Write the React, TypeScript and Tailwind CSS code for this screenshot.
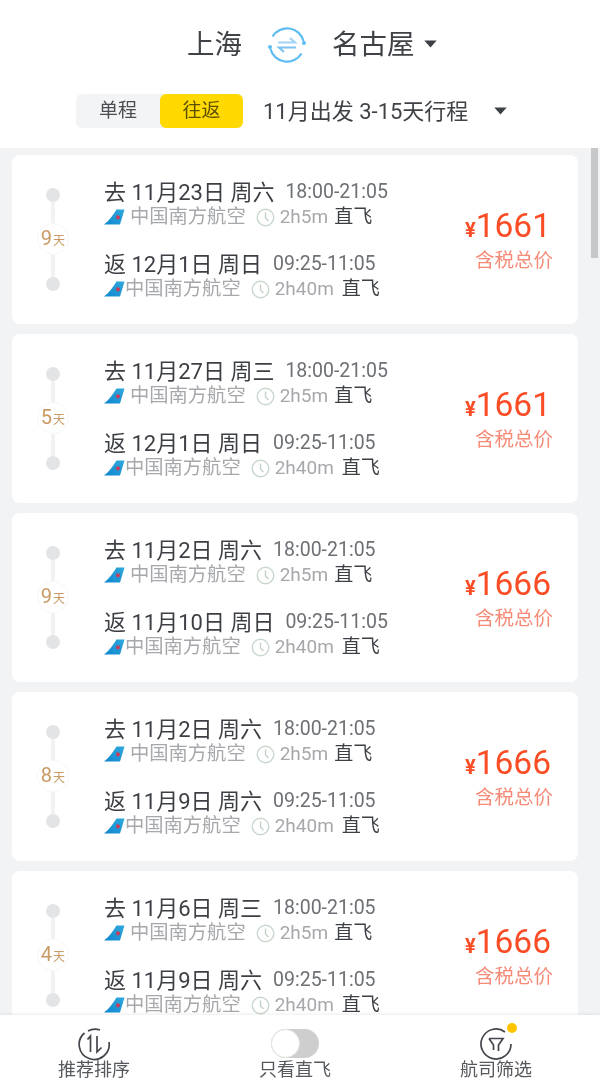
import React from "react";

const FONT = "[font-family:Roboto,'Noto_Sans_CJK_SC',sans-serif]";

function Logo() {
  return (
    <svg width="21" height="16" viewBox="0 0 21 16" className="shrink-0">
      <defs>
        <linearGradient id="lg" x1="0" y1="1" x2="1" y2="0">
          <stop offset="0" stopColor="#0f86cf" />
          <stop offset="1" stopColor="#2fa9dd" />
        </linearGradient>
      </defs>
      <path d="M0 15.5 C5 12 9 6 12.5 0.5 H20.5 L16 15.5 Z" fill="url(#lg)" />
      <path d="M13 6 l1.3 1 1.6-.5-.4 1.7 1 1.2-1.7.2-.9 1.6-.8-1.6-1.7-.3 1.2-1.2-.1-1.8z" fill="#d8344f" />
    </svg>
  );
}

function Clock() {
  return (
    <svg width="19" height="19" viewBox="0 0 19 19" className="shrink-0" fill="none">
      <circle cx="9.5" cy="9.5" r="8.3" stroke="#c9d8cc" strokeWidth="1.4" />
      <path d="M9.5 4.5 V10 L12.5 13" stroke="#c2d2c6" strokeWidth="1.4" />
    </svg>
  );
}

function Leg({ label, date, time, dur, logoGap, clockGap, flyGap, first }: { label: string; date: string; time: string; dur: string; logoGap: string; clockGap: string; flyGap: string; first: boolean }) {
  return (
    <div className={first ? "" : "mt-[23px]"}>
      <div className="flex items-center h-6 whitespace-nowrap">
        <span className="text-[22px] text-[#3c3f44]">{label} {date}</span>
        <span className="text-[19.5px] text-[#6d7074] ml-[11px]">{time}</span>
      </div>
      <div className="flex items-center h-6 mt-px whitespace-nowrap">
        <Logo />
        <span className={`text-[19.3px] text-[#a6a8ab] ${logoGap}`}>中国南方航空</span>
        <span className={clockGap}><Clock /></span>
        <span className="text-[19px] text-[#a6a8ab] ml-[5px]">{dur}</span>
        <span className={`text-[19px] text-[#3c3f44] ${flyGap}`}>直飞</span>
      </div>
    </div>
  );
}

function Card({ days, out, back, price }: { days: number; out: string; back: string; price: number }) {
  return (
    <div className="bg-white rounded-lg h-[169px] shrink-0 flex">
      <div className="ml-[25px] w-8 mr-[35px] pt-[33px] flex flex-col items-center shrink-0">
        <div className="w-[14px] h-[14px] rounded-full bg-[#e3e4e5]" />
        <div className="w-1 h-[21px] bg-[#f2f2f3]" />
        <div className="w-8 h-8 rounded-full border border-[#f7f7f7] flex items-baseline justify-center pt-[2px] text-[#c99a63]">
          <span className="text-[20px] leading-6">{days}</span>
          <span className="text-[12px] leading-6 ml-px">天</span>
        </div>
        <div className="w-1 h-[22px] bg-[#f2f2f3]" />
        <div className="w-[14px] h-[14px] rounded-full bg-[#e3e4e5]" />
      </div>
      <div className="pt-[25px] flex-1 min-w-0">
        <Leg first label="去" date={out} time="18:00-21:05" dur="2h5m" logoGap="ml-[5px]" clockGap="ml-[10px]" flyGap="ml-[6px]" />
        <Leg first={false} label="返" date={back} time="09:25-11:05" dur="2h40m" logoGap="ml-0" clockGap="ml-[10px]" flyGap="ml-[8px]" />
      </div>
      <div className="pr-[25px] pt-[49px] flex flex-col items-end shrink-0">
        <div className="h-11 flex items-baseline text-[#fa4d26] pr-[2px]">
          <span className="text-[20px] font-bold leading-[44px]">¥</span>
          <span className="text-[33.5px] leading-[44px]">{price}</span>
        </div>
        <div className="h-6 mt-px text-[19.5px] leading-6 text-[#f58a76]">含税总价</div>
      </div>
    </div>
  );
}

const Tri = ({ w, h }: { w: number; h: number }) => (
  <svg width={w} height={h} viewBox="0 0 12 7"><path d="M0.3 0.3 H11.7 L6 6.8 Z" fill="#3c3f44" /></svg>
);

export default function App() {
  return (
    <div className={`w-[600px] h-[1090px] overflow-hidden flex flex-col bg-white relative blur-[0.4px] ${FONT}`}>
      <header className="h-[148px] shrink-0 bg-white">
        <div className="pt-[25px] h-[94px] flex items-start pl-[187px]">
          <div className="flex items-center h-10 whitespace-nowrap text-[27.5px] text-[#3f4246]">
            <span>上海</span>
            <svg width="40" height="40" viewBox="0 0 40 40" fill="none" className="ml-[25px] mt-[-1px]">
              <path d="M5.5 11.5 A17 17 0 0 1 36.5 16" stroke="#5cbcf2" strokeWidth="2.2" />
              <path d="M34.5 28.5 A17 17 0 0 1 3.5 24" stroke="#5cbcf2" strokeWidth="2.2" />
              <circle cx="37" cy="18" r="2" fill="#5cbcf2" />
              <circle cx="3" cy="22" r="2" fill="#5cbcf2" />
              <path d="M11 17.5 H28 L23 13" stroke="#a3d3f5" strokeWidth="2.2" />
              <path d="M29 22.5 H12 L17 27" stroke="#7fc2f0" strokeWidth="2.2" />
            </svg>
            <span className="ml-[25px]">名古屋</span>
            <span className="ml-[9px] mb-[2px] flex"><Tri w={13} h={8} /></span>
          </div>
        </div>
        <div className="flex items-center pl-[76px]">
          <div className="flex h-[34px] w-[167px] bg-[#f3f4f5] rounded-md text-[19px] text-[#4a4d52]">
            <div className="w-[84px] flex items-center justify-center pt-px">单程</div>
            <div className="w-[83px] flex items-center justify-center pt-px bg-[#ffd900] rounded-md text-[#5a5000]">往返</div>
          </div>
          <span className="ml-[20px] text-[22px] text-[#3f4246] whitespace-nowrap">11月出发 3-15天行程</span>
          <span className="ml-[26px] flex"><Tri w={13} h={8} /></span>
        </div>
      </header>
      <main className="flex-1 min-h-0 overflow-hidden bg-[#f2f3f5] pt-[7px] px-3 pr-[22px] flex flex-col gap-[10px]">
        <Card days={9} out="11月23日 周六" back="12月1日 周日" price={1661} />
        <Card days={5} out="11月27日 周三" back="12月1日 周日" price={1661} />
        <Card days={9} out="11月2日 周六" back="11月10日 周日" price={1666} />
        <Card days={8} out="11月2日 周六" back="11月9日 周六" price={1666} />
        <Card days={4} out="11月6日 周三" back="11月9日 周六" price={1666} />
      </main>
      <div className="absolute right-[2px] top-[148px] w-[7px] h-[110px] bg-[#c6c7c8]" />
      <footer className="h-[75px] shrink-0 bg-white shadow-[0_-1px_3px_rgba(0,0,0,0.08)] z-10 flex justify-between pl-[58px] pr-[68px] pt-[12px] text-[18px] text-[#55585c]">
        <div className="w-[72px] flex flex-col items-center">
          <svg width="34" height="34" viewBox="0 0 34 34" fill="none" stroke="#43474b" strokeWidth="1.7">
            <path d="M7.5 6 A15 15 0 1 0 32 15" />
            <path d="M11 4 A15 15 0 0 1 23 3" />
            <path d="M10.5 12.5 L13.5 9 V25" />
            <path d="M20 9 V25 L24.5 20.5" />
          </svg>
          <span className="mt-[-3px] leading-6 whitespace-nowrap">推荐排序</span>
        </div>
        <div className="w-[72px] flex flex-col items-center">
          <div className="w-12 h-[29px] mt-[2px] rounded-full bg-[#cdcecd] relative">
            <div className="absolute left-0 top-0 w-[29px] h-[29px] rounded-full bg-white border border-[#dfe6df]" />
          </div>
          <span className="mt-0 leading-6 whitespace-nowrap">只看直飞</span>
        </div>
        <div className="w-[72px] flex flex-col items-center relative">
          <svg width="34" height="34" viewBox="0 0 34 34" fill="none" stroke="#43474b" strokeWidth="1.7">
            <path d="M26 5 A15 15 0 1 0 32 17" />
            <path d="M10 11.5 H24 L19.5 18 V24 M10 11.5 L14.5 18 V23" />
          </svg>
          <span className="absolute left-[47px] top-[-4px] w-[10px] h-[10px] rounded-full bg-[#ffc400]" />
          <span className="mt-[-3px] leading-6 whitespace-nowrap">航司筛选</span>
        </div>
      </footer>
    </div>
  );
}
